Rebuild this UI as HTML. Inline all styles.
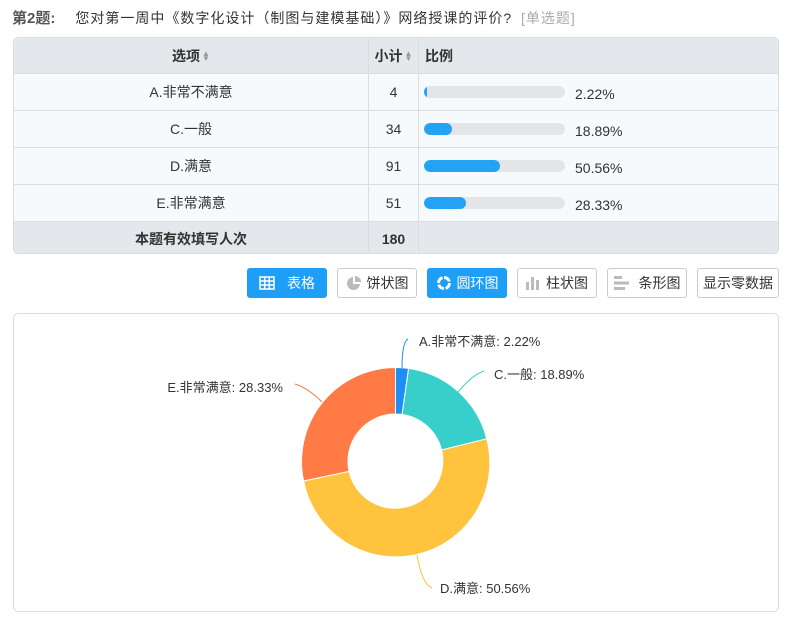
<!DOCTYPE html>
<html><head><meta charset="utf-8"><style>
*{margin:0;padding:0;box-sizing:border-box}
body{width:790px;height:621px;background:#fff;font-family:"Liberation Sans","Noto Sans CJK SC",sans-serif;font-size:14px;color:#333;position:relative;overflow:hidden}
.abs{position:absolute}
.title{left:12px;top:9px;font-size:14px;white-space:nowrap;letter-spacing:1px;line-height:18px}
.title b{font-size:15px;color:#555;margin-right:20px;letter-spacing:0}
.title .t{color:#aaa;margin-left:4px}
.tbl{left:13px;top:37px;width:766px;height:217px;border:1px solid #ddd;border-radius:5px;overflow:hidden}
.row{position:absolute;left:0;width:100%;border-top:1px solid #ddd;background:#f7fafd}
.cell{position:absolute;top:0;height:100%;display:flex;align-items:center;line-height:1}
.c1{left:0;width:355px;justify-content:center;border-right:1px solid #ddd}
.c2{left:355px;width:50px;justify-content:center;border-right:1px solid #ddd}
.c3{left:405px;right:0;padding-left:6px}
.hd{background:#e4e7eb;font-weight:bold;color:#333}
.bar{position:absolute;left:5px;top:50%;margin-top:-6px;width:141px;height:12px;border-radius:6px;background:#e4e5e7;overflow:hidden}
.bar i{display:block;height:100%;background:#24a3f5;border-radius:6px}
.pct{position:absolute;left:156px;top:50%;margin-top:-5px}
.sa{display:inline-block;font-size:8px;color:#999;line-height:5px;margin-left:2px;vertical-align:middle}
.btn{top:268px;height:30px;border:1px solid #ccc;border-radius:3px;display:flex;align-items:center;justify-content:center;font-size:14px;color:#333;background:#fff}
.btn.on{background:#1e9ef7;border-color:#1e9ef7;color:#fff}
.chart{left:13px;top:313px;width:766px;height:299px;border:1px solid #ddd;border-radius:5px}
</style></head><body>
<div class="abs title"><b>第2题:</b>您对第一周中《数字化设计（制图与建模基础）》网络授课的评价? <span class="t">[单选题]</span></div>
<div class="abs tbl">
 <div class="row hd" style="top:0;height:35px;border-top:none"><div class="cell c1">选项<span class="sa">▲<br>▼</span></div><div class="cell c2">小计<span class="sa">▲<br>▼</span></div><div class="cell c3">比例</div></div>
 <div class="row" style="top:35px;height:37px"><div class="cell c1">A.非常不满意</div><div class="cell c2">4</div><div class="cell c3"><div class="bar"><i style="width:3px"></i></div><span class="pct">2.22%</span></div></div>
 <div class="row" style="top:72px;height:37px"><div class="cell c1">C.一般</div><div class="cell c2">34</div><div class="cell c3"><div class="bar"><i style="width:28px"></i></div><span class="pct">18.89%</span></div></div>
 <div class="row" style="top:109px;height:37px"><div class="cell c1">D.满意</div><div class="cell c2">91</div><div class="cell c3"><div class="bar"><i style="width:76px"></i></div><span class="pct">50.56%</span></div></div>
 <div class="row" style="top:146px;height:37px"><div class="cell c1">E.非常满意</div><div class="cell c2">51</div><div class="cell c3"><div class="bar"><i style="width:42px"></i></div><span class="pct">28.33%</span></div></div>
 <div class="row hd" style="top:183px;height:34px"><div class="cell c1">本题有效填写人次</div><div class="cell c2">180</div><div class="cell c3"></div></div>
</div>
<div class="abs btn on" style="left:247px;width:80px"><svg width="16" height="14" style="margin-right:12px"><g fill="none" stroke="#fff" stroke-width="1.5"><rect x="1" y="1" width="14" height="12"/><path d="M1 5H15M1 9H15M5.7 1V13M10.3 1V13"/></g></svg>表格</div>
<div class="abs btn" style="left:337px;width:80px"><svg width="16" height="16" style="margin-right:5px"><path d="M7 2A6.5 6.5 0 1 0 14 9H7Z" fill="#bbb"/><path d="M9 1A6 6 0 0 1 15 7H9Z" fill="#bbb"/></svg>饼状图</div>
<div class="abs btn on" style="left:427px;width:80px"><svg width="16" height="16" style="margin-right:5px"><circle cx="8" cy="8" r="5.5" fill="none" stroke="#fff" stroke-width="3" stroke-dasharray="7 1.6"/></svg>圆环图</div>
<div class="abs btn" style="left:517px;width:80px"><svg width="14" height="14" style="margin-right:6px"><g fill="#bbb"><rect x="0" y="6" width="3" height="8"/><rect x="5" y="1" width="3" height="13"/><rect x="10" y="4" width="3" height="10"/></g></svg>柱状图</div>
<div class="abs btn" style="left:607px;width:80px"><svg width="16" height="14" style="margin-right:9px"><g fill="#bbb"><rect x="0" y="0" width="8" height="3"/><rect x="0" y="5.5" width="15" height="3"/><rect x="0" y="11" width="11" height="3"/></g></svg>条形图</div>
<div class="abs btn" style="left:697px;width:82px">显示零数据</div>
<div class="abs chart"></div>
<svg class="abs" style="left:0;top:0" width="790" height="621">
<g stroke="#fff" stroke-width="1">
<path d="M395.5 367.5A94 94 0 0 1 408.6 368.4L402.1 414.5A47.5 47.5 0 0 0 395.5 414Z" fill="#1b8ff5"/>
<path d="M408.6 368.4A94 94 0 0 1 486.7 438.8L441.6 450A47.5 47.5 0 0 0 402.1 414.5Z" fill="#38cfca"/>
<path d="M486.7 438.8A94 94 0 1 1 303.6 481L349 471.4A47.5 47.5 0 1 0 441.6 450Z" fill="#ffc33e"/>
<path d="M303.6 481A94 94 0 0 1 395.5 367.5L395.5 414A47.5 47.5 0 0 0 349 471.4Z" fill="#ff7a45"/>
</g>
<g fill="none" stroke-width="1">
<path d="M402 368Q402 342 408 339" stroke="#1b8ff5"/>
<path d="M458 392Q472 375 484 371" stroke="#38cfca"/>
<path d="M417 555Q422 584 432 588" stroke="#ffc33e"/>
<path d="M322 402Q308 388 295 384" stroke="#ff7a45"/>
</g>
<g font-size="13" fill="#333" font-family="Liberation Sans,Noto Sans CJK SC,sans-serif">
<text x="419" y="346">A.非常不满意: 2.22%</text>
<text x="494" y="379">C.一般: 18.89%</text>
<text x="440" y="593">D.满意: 50.56%</text>
<text x="283" y="392" text-anchor="end">E.非常满意: 28.33%</text>
</g>
</svg>
</body></html>
